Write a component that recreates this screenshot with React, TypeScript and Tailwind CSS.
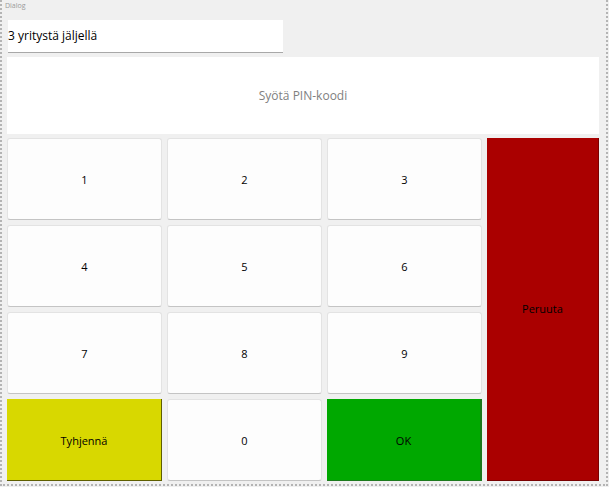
import React from "react";

const font = { fontFamily: '"Open Sans", "Noto Sans", sans-serif' };

function DigitButton({ label }: { label: string }) {
  return (
    <button className="flex items-center justify-center rounded-[3px] border border-[#e3e3e3] border-b-[#c4c4c4] bg-[#fdfdfd] pt-[3px] text-[11px] text-black">
      {label}
    </button>
  );
}

export default function App() {
  const digits = ["1", "2", "3", "4", "5", "6", "7", "8", "9"];

  return (
    <div className="h-[487px] w-[609px] bg-[#f0f0f0]" style={font}>
      <div className="relative flex h-[486px] w-[608px] flex-col border-r-2 border-b-2 border-l-2 border-dotted border-[#b4b4b4] pl-[5px] pr-[7px] pt-[20px]">
        <span className="absolute left-[3px] top-[2px] text-[7px] leading-none text-[#9a9a9a]">Dialog</span>

        <div className="ml-[1px] flex h-[33px] w-[275px] items-center border-b border-[#a8a8a8] bg-white text-[12px] text-black">
          3 yritystä jäljellä
        </div>

        <div className="mt-[4px] flex h-[77px] items-center justify-center bg-white text-[12px] text-[#808080]">
          Syötä PIN-koodi
        </div>

        <div className="mt-[4px] grid h-[343px] grid-cols-[155px_155px_155px_1fr] grid-rows-[82px_82px_82px_82px] gap-x-[5px] gap-y-[5px]">
          {digits.slice(0, 3).map((d) => (
            <DigitButton key={d} label={d} />
          ))}
          <button className="row-span-4 flex items-center justify-center border-r border-b border-[#7a0000] bg-[#aa0000] text-[11px] text-black">
            Peruuta
          </button>
          {digits.slice(3).map((d) => (
            <DigitButton key={d} label={d} />
          ))}
          <button className="flex items-center justify-center border-r border-b border-[#5e5e00] bg-[#d8d800] pt-[3px] text-[11px] text-black">
            Tyhjennä
          </button>
          <DigitButton label="0" />
          <button className="flex items-center justify-center border-r-2 border-b border-[#1d7a1d] bg-[#00a800] pt-[3px] text-[11px] text-black">
            OK
          </button>
        </div>
      </div>
    </div>
  );
}
